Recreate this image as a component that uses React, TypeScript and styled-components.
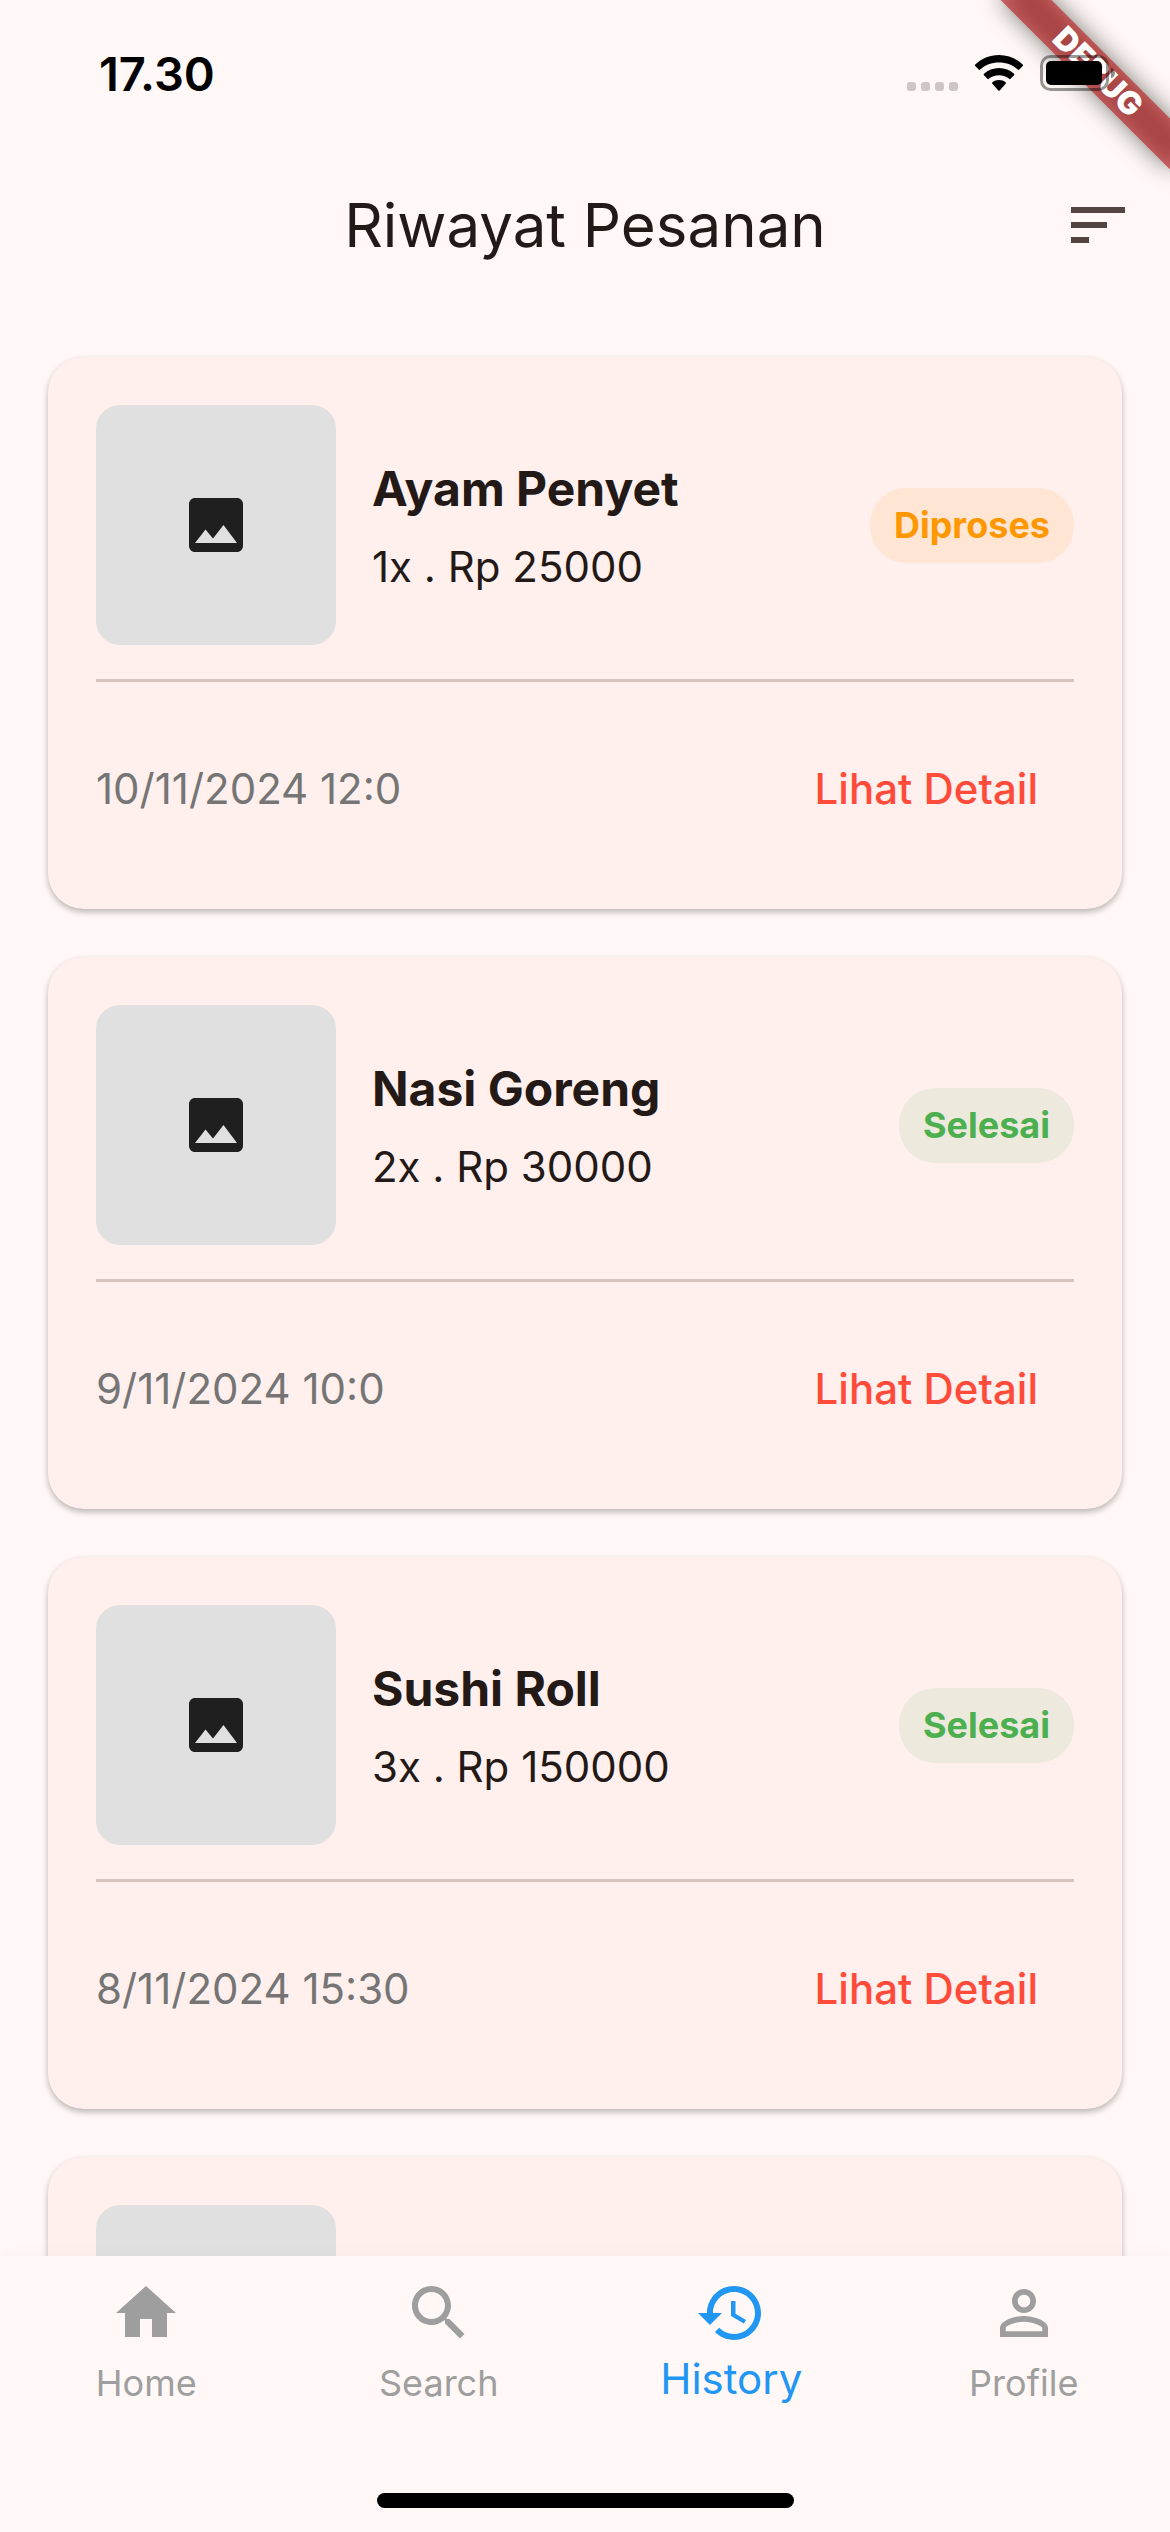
import React from "react";
import styled, { createGlobalStyle } from "styled-components";

const color = {
  surface: "#fff8f6",
  card: "#fff0ed",
  text: "#231917",
  iconMuted: "#534341",
  divider: "#d8c2be",
  grey: "#9e9e9e",
  date: "#757575",
  red: "#ff4b3a",
  blue: "#2196f3",
};

const GlobalStyle = createGlobalStyle`
  * { box-sizing: border-box; }
  body {
    margin: 0;
    background: ${color.surface};
    color: ${color.text};
    font-family: Inter, Roboto, "Liberation Sans", sans-serif;
  }
  button { font-family: inherit; border: 0; background: none; padding: 0; cursor: pointer; }
  svg { display: block; flex: none; }
`;

const Screen = styled.div`
  position: relative;
  display: flex;
  flex-direction: column;
  height: 100vh;
  overflow: hidden;
`;

const StatusBar = styled.div`
  display: flex;
  align-items: center;
  justify-content: space-between;
  flex: none;
  height: 141px;
  padding: 6px 54px 0 99px;
`;

const Clock = styled.time`
  font-size: 47px;
  line-height: 60px;
  font-weight: 600;
  color: #000;
`;

const StatusIcons = styled.div`
  position: relative;
  z-index: 3;
  display: flex;
  gap: 17px;
`;

const BannerCorner = styled.div`
  position: absolute;
  top: 0;
  right: 0;
  z-index: 2;
  width: 240px;
  height: 240px;
  overflow: hidden;
  pointer-events: none;
`;

const Banner = styled.div`
  position: absolute;
  top: 54px;
  right: -48px;
  width: 240px;
  height: 36px;
  transform: rotate(45deg);
  &::before {
    content: "";
    position: absolute;
    inset: 0;
    background: rgba(0, 0, 0, 0.5);
    filter: blur(12px);
  }
`;

const BannerLabel = styled.span`
  position: relative;
  display: block;
  background: rgba(183, 28, 28, 0.63);
  color: #fff;
  font-size: 32px;
  line-height: 36px;
  font-weight: 900;
  text-align: center;
`;

const AppBar = styled.header`
  display: grid;
  grid-template-columns: 144px 1fr 144px;
  align-items: center;
  flex: none;
  height: 168px;
`;

const Title = styled.h1`
  grid-column: 2;
  margin: 0;
  font-size: 60px;
  line-height: 84px;
  font-weight: 400;
  text-align: center;
`;

const SortButton = styled.button`
  display: grid;
  place-items: center;
  height: 144px;
  color: ${color.iconMuted};
`;

const OrderList = styled.main`
  display: flex;
  flex-direction: column;
  gap: 48px;
  flex: 1;
  min-height: 0;
  padding: 48px;
  overflow-y: auto;
  scrollbar-width: none;
`;

const Card = styled.article`
  flex: none;
  padding: 48px;
  border-radius: 36px;
  background: ${color.card};
  box-shadow: 0 3px 6px rgba(0, 0, 0, 0.28);
`;

const Summary = styled.div`
  display: flex;
  align-items: center;
  gap: 36px;
`;

const Thumb = styled.div`
  display: grid;
  place-items: center;
  flex: none;
  width: 240px;
  height: 240px;
  border-radius: 24px;
  background: #e0e0e0;
  color: #1f1f1f;
`;

const Info = styled.div`
  display: flex;
  flex-direction: column;
  gap: 12px;
  flex: 1;
  min-width: 0;
`;

const DishName = styled.h2`
  margin: 0;
  font-size: 48px;
  line-height: 72px;
  font-weight: 700;
`;

const Price = styled.p`
  margin: 0;
  font-size: 42px;
  line-height: 60px;
`;

const Badge = styled.span<{ $done: boolean }>`
  padding: 12px 24px;
  border-radius: 36px;
  font-size: 36px;
  line-height: 51px;
  font-weight: 700;
  color: ${(p) => (p.$done ? "#4caf50" : "#ff9800")};
  background: ${(p) => (p.$done ? "rgba(76, 175, 80, 0.1)" : "rgba(255, 152, 0, 0.1)")};
`;

const Divider = styled.hr`
  height: 3px;
  margin: 34px 0 35px;
  border: 0;
  background: ${color.divider};
`;

const Footer = styled.div`
  display: flex;
  align-items: center;
  justify-content: space-between;
  height: 144px;
`;

const OrderDate = styled.time`
  font-size: 42px;
  line-height: 60px;
  color: ${color.date};
`;

const DetailButton = styled.button`
  height: 120px;
  padding: 0 36px;
  border-radius: 60px;
  color: ${color.red};
  font-size: 42px;
  line-height: 60px;
  font-weight: 500;
`;

const BottomBar = styled.footer`
  position: relative;
  z-index: 1;
  flex: none;
  background: ${color.surface};
  box-shadow: 0 0 15px rgba(0, 0, 0, 0.04);
`;

const Tabs = styled.nav`
  display: grid;
  grid-template-columns: repeat(4, 1fr);
  height: 174px;
`;

const Tab = styled.button<{ $active: boolean }>`
  display: flex;
  flex-direction: column;
  align-items: center;
  justify-content: space-between;
  padding: 21px 0 ${(p) => (p.$active ? 26 : 21)}px;
  color: ${(p) => (p.$active ? color.blue : color.grey)};
  font-size: ${(p) => (p.$active ? 42 : 36)}px;
  line-height: 51px;
`;

const HomeArea = styled.div`
  display: flex;
  justify-content: center;
  align-items: flex-end;
  height: 102px;
  padding-bottom: 24px;
`;

const HomeIndicator = styled.div`
  width: 417px;
  height: 15px;
  border-radius: 8px;
  background: #000;
`;

const paths = {
  sort: "M3 18h6v-2H3v2zM3 6v2h18V6H3zm0 7h12v-2H3v2z",
  image:
    "M21 19V5c0-1.1-.9-2-2-2H5c-1.1 0-2 .9-2 2v14c0 1.1.9 2 2 2h14c1.1 0 2-.9 2-2zM8.5 13.5l2.5 3.01L14.5 12l4.5 6H5l3.5-4.5z",
  home: "M10 20v-6h4v6h5v-8h3L12 3 2 12h3v8z",
  search:
    "M15.5 14h-.79l-.28-.27C15.41 12.59 16 11.11 16 9.5 16 5.91 13.09 3 9.5 3S3 5.91 3 9.5 5.91 16 9.5 16c1.61 0 3.09-.59 4.23-1.57l.27.28v.79l5 4.99L20.49 19l-4.99-5zm-6 0C7.01 14 5 11.99 5 9.5S7.01 5 9.5 5 14 7.01 14 9.5 11.99 14 9.5 14z",
  history:
    "M13 3c-4.97 0-9 4.03-9 9H1l3.89 3.89.07.14L9 12H6c0-3.87 3.13-7 7-7s7 3.13 7 7-3.13 7-7 7c-1.93 0-3.68-.79-4.94-2.06l-1.42 1.42C8.27 19.99 10.51 21 13 21c4.97 0 9-4.03 9-9s-4.03-9-9-9zm-1 5v5l4.28 2.54.72-1.21-3.5-2.08V8H12z",
  person:
    "M12 5.9c1.16 0 2.1.94 2.1 2.1s-.94 2.1-2.1 2.1S9.900 9.160 9.900 8s.94-2.100 2.100-2.100m0 9c2.970 0 6.100 1.460 6.100 2.100v1.100H5.900V17c0-.64 3.130-2.100 6.100-2.100M12 4C9.790 4 8 5.790 8 8s1.790 4 4 4 4-1.790 4-4-1.790-4-4-4zm0 9c-2.670 0-8 1.340-8 4v3h16v-3c0-2.660-5.330-4-8-4z",
};

function Icon({ name }: { name: keyof typeof paths }) {
  return (
    <svg width="72" height="72" viewBox="0 0 24 24" fill="currentColor" aria-hidden="true">
      <path d={paths[name]} />
    </svg>
  );
}

function SignalIcons() {
  return (
    <StatusIcons>
      <svg width="51" height="37" viewBox="0 0 51 37" fill="#cdc6c5">
        {[0, 14, 28, 42].map((x) => (
          <rect key={x} x={x} y="27" width="9" height="9" rx="3" />
        ))}
      </svg>
      <svg width="48" height="37" viewBox="0 0 48 37" fill="#000">
        <path d="M24 0C14.700 0 6.300 3.600.3 9.500a1 1 0 0 0 0 1.500l3.400 3.500a1 1 0 0 0 1.500 0C10 9.900 16.700 7.400 24 7.400s14 2.500 18.800 7.100a1 1 0 0 0 1.500 0l3.400-3.500a1 1 0 0 0 0-1.500C41.700 3.600 33.300 0 24 0z" />
        <path d="M24 13c-5.800 0-11 2.200-15 5.800a1 1 0 0 0 0 1.500l3.400 3.500a1 1 0 0 0 1.400 0C16.500 21.500 20 20.200 24 20.200s7.500 1.300 10.200 3.600a1 1 0 0 0 1.400 0l3.400-3.500a1 1 0 0 0 0-1.500C35 15.200 29.800 13 24 13z" />
        <path d="M24 25c-2.600 0-4.900.9-6.600 2.300a1 1 0 0 0 0 1.500l5.900 6.600a1 1 0 0 0 1.400 0l5.900-6.600a1 1 0 0 0 0-1.500C28.900 25.900 26.600 25 24 25z" />
      </svg>
      <svg width="76" height="37" viewBox="0 0 76 37" fill="none">
        <rect x="1.500" y="1.500" width="66" height="33" rx="9" stroke="#000" strokeOpacity="0.4" strokeWidth="3" />
        <rect x="6" y="6" width="56" height="24" rx="5" fill="#000" />
        <path d="M71 12.500c2.500 1 4 3 4 5.500s-1.500 4.500-4 5.500z" fill="#000" fillOpacity="0.45" />
      </svg>
    </StatusIcons>
  );
}

type Order = { name: string; detail: string; status: string; date: string };

const orders: Order[] = [
  { name: "Ayam Penyet", detail: "1x . Rp 25000", status: "Diproses", date: "10/11/2024 12:0" },
  { name: "Nasi Goreng", detail: "2x . Rp 30000", status: "Selesai", date: "9/11/2024 10:0" },
  { name: "Sushi Roll", detail: "3x . Rp 150000", status: "Selesai", date: "8/11/2024 15:30" },
];

function OrderCard({ order }: { order: Order }) {
  return (
    <Card>
      <Summary>
        <Thumb>
          <Icon name="image" />
        </Thumb>
        <Info>
          <DishName>{order.name}</DishName>
          <Price>{order.detail}</Price>
        </Info>
        <Badge $done={order.status === "Selesai"}>{order.status}</Badge>
      </Summary>
      <Divider />
      <Footer>
        <OrderDate>{order.date}</OrderDate>
        <DetailButton type="button">Lihat Detail</DetailButton>
      </Footer>
    </Card>
  );
}

const tabs: { label: string; icon: keyof typeof paths }[] = [
  { label: "Home", icon: "home" },
  { label: "Search", icon: "search" },
  { label: "History", icon: "history" },
  { label: "Profile", icon: "person" },
];

export default function App() {
  const [active, setActive] = React.useState("History");
  return (
    <>
      <GlobalStyle />
      <Screen>
        <StatusBar>
          <Clock>17.30</Clock>
          <SignalIcons />
        </StatusBar>
        <BannerCorner>
          <Banner>
            <BannerLabel>DEBUG</BannerLabel>
          </Banner>
        </BannerCorner>
        <AppBar>
          <Title>Riwayat Pesanan</Title>
          <SortButton type="button">
            <Icon name="sort" />
          </SortButton>
        </AppBar>
        <OrderList>
          {orders.map((order) => (
            <OrderCard key={order.name} order={order} />
          ))}
          <Card aria-hidden="true">
            <Thumb />
          </Card>
        </OrderList>
        <BottomBar>
          <Tabs>
            {tabs.map((tab) => (
              <Tab key={tab.label} type="button" $active={tab.label === active} onClick={() => setActive(tab.label)}>
                <Icon name={tab.icon} />
                <span>{tab.label}</span>
              </Tab>
            ))}
          </Tabs>
          <HomeArea>
            <HomeIndicator />
          </HomeArea>
        </BottomBar>
      </Screen>
    </>
  );
}
